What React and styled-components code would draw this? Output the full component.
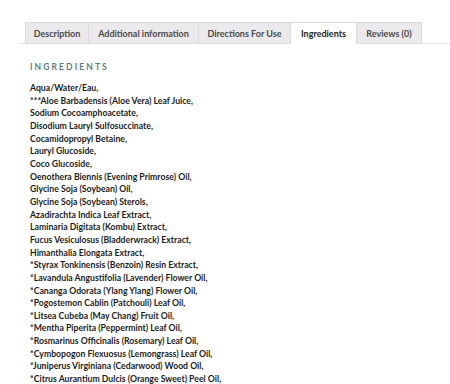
import styled, { createGlobalStyle } from "styled-components";

const GlobalStyle = createGlobalStyle`
  body {
    margin: 0;
    background: #ffffff;
    font-family: "Lato", "Open Sans", sans-serif;
  }
`;

const Page = styled.div`
  width: 450px;
  height: 384px;
  overflow: hidden;
  padding: 22px 0 0 19px;
  box-sizing: border-box;
`;

const Tabs = styled.ul`
  display: flex;
  margin: 0;
  padding: 0 0 0 6px;
  list-style: none;
  border-bottom: 1px solid #e4e4e4;
`;

const Tab = styled.li`
  width: ${(props) => props.w}px;
  height: 22px;
  box-sizing: border-box;
  display: flex;
  align-items: center;
  justify-content: center;
  margin-bottom: -1px;
  font-size: 9px;
  font-weight: 700;
  color: ${(props) => (props.active ? "#222222" : "#4a4a4a")};
  background: ${(props) => (props.active ? "#ffffff" : "#ebe9ec")};
  border: 1px solid #dcdbdd;
  border-left: ${(props) => (props.first ? "1px solid #dcdbdd" : "none")};
  border-bottom: 1px solid ${(props) => (props.active ? "#ffffff" : "#dcdbdd")};
  white-space: nowrap;
`;

const Panel = styled.div`
  padding: 18px 0 0 11px;
`;

const Heading = styled.h2`
  margin: 0 0 10px;
  font-size: 8.5px;
  font-weight: 700;
  letter-spacing: 2.1px;
  color: #5a7f81;
`;

const List = styled.div`
  font-size: 8.7px;
  font-weight: 700;
  line-height: 12.65px;
  color: #1d1d1d;
`;

const tabs = [
  { label: "Description", w: 64, first: true },
  { label: "Additional information", w: 110 },
  { label: "Directions For Use", w: 92 },
  { label: "Ingredients", w: 66, active: true },
  { label: "Reviews (0)", w: 65 },
];

const ingredients = [
  "Aqua/Water/Eau,",
  "***Aloe Barbadensis (Aloe Vera) Leaf Juice,",
  "Sodium Cocoamphoacetate,",
  "Disodium Lauryl Sulfosuccinate,",
  "Cocamidopropyl Betaine,",
  "Lauryl Glucoside,",
  "Coco Glucoside,",
  "Oenothera Biennis (Evening Primrose) Oil,",
  "Glycine Soja (Soybean) Oil,",
  "Glycine Soja (Soybean) Sterols,",
  "Azadirachta Indica Leaf Extract,",
  "Laminaria Digitata (Kombu) Extract,",
  "Fucus Vesiculosus (Bladderwrack) Extract,",
  "Himanthalia Elongata Extract,",
  "*Styrax Tonkinensis (Benzoin) Resin Extract,",
  "*Lavandula Angustifolia (Lavender) Flower Oil,",
  "*Cananga Odorata (Ylang Ylang) Flower Oil,",
  "*Pogostemon Cablin (Patchouli) Leaf Oil,",
  "*Litsea Cubeba (May Chang) Fruit Oil,",
  "*Mentha Piperita (Peppermint) Leaf Oil,",
  "*Rosmarinus Officinalis (Rosemary) Leaf Oil,",
  "*Cymbopogon Flexuosus (Lemongrass) Leaf Oil,",
  "*Juniperus Virginiana (Cedarwood) Wood Oil,",
  "*Citrus Aurantium Dulcis (Orange Sweet) Peel Oil,",
];

export default function App() {
  return (
    <Page>
      <GlobalStyle />
      <Tabs>
        {tabs.map((t) => (
          <Tab key={t.label} w={t.w} active={t.active} first={t.first}>
            {t.label}
          </Tab>
        ))}
      </Tabs>
      <Panel>
        <Heading>INGREDIENTS</Heading>
        <List>
          {ingredients.map((i) => (
            <div key={i}>{i}</div>
          ))}
        </List>
      </Panel>
    </Page>
  );
}
